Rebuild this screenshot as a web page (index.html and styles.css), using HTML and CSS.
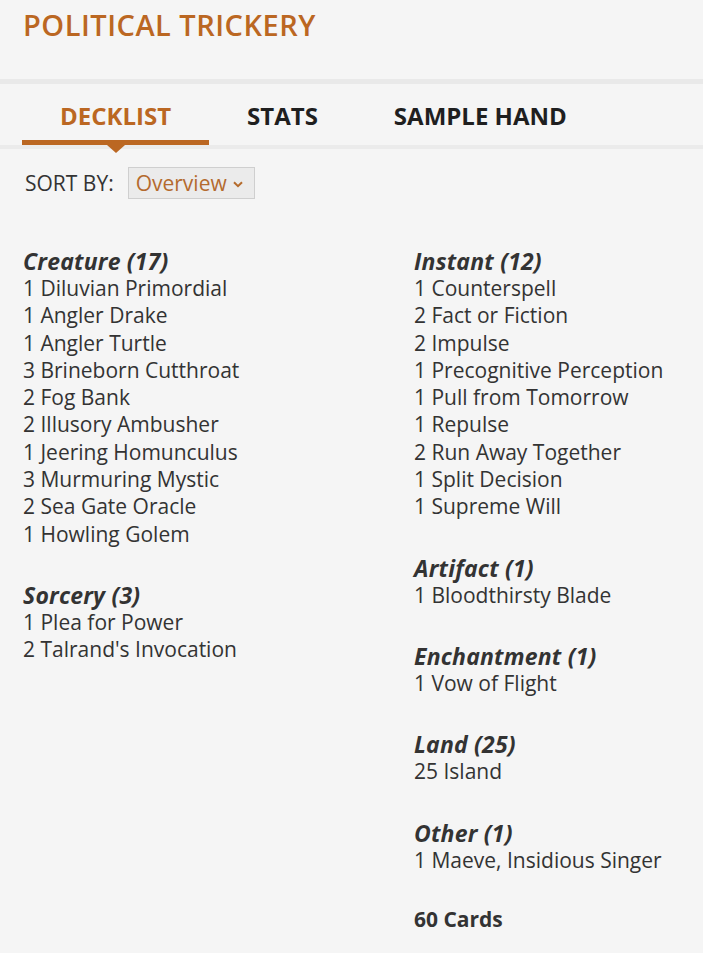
FILE: index.html
```html
<!DOCTYPE html>
<html>
<head>
<meta charset="utf-8">
<link rel="stylesheet" href="styles.css">
</head>
<body>
<div class="page">
  <h1 class="title">POLITICAL TRICKERY</h1>
  <div class="band"></div>
  <nav class="tabs">
    <div class="tab active">DECKLIST</div>
    <div class="tab">STATS</div>
    <div class="tab">SAMPLE HAND</div>
  </nav>
  <div class="band band2"></div>
  <div class="sort">
    <span class="sort-label">SORT BY:</span>
    <div class="select"><span>Overview</span>
      <svg class="chev" width="10" height="7" viewBox="0 0 10 7"><path d="M1 1.2 L5 5.2 L9 1.2" fill="none" stroke="#b56b2c" stroke-width="2"/></svg>
    </div>
  </div>
  <div class="cols">
    <div class="col">
      <section class="group">
        <h3>Creature (17)</h3>
        <div>1 Diluvian Primordial</div>
        <div>1 Angler Drake</div>
        <div>1 Angler Turtle</div>
        <div>3 Brineborn Cutthroat</div>
        <div>2 Fog Bank</div>
        <div>2 Illusory Ambusher</div>
        <div>1 Jeering Homunculus</div>
        <div>3 Murmuring Mystic</div>
        <div>2 Sea Gate Oracle</div>
        <div>1 Howling Golem</div>
      </section>
      <section class="group">
        <h3>Sorcery (3)</h3>
        <div>1 Plea for Power</div>
        <div>2 Talrand's Invocation</div>
      </section>
    </div>
    <div class="col">
      <section class="group">
        <h3>Instant (12)</h3>
        <div>1 Counterspell</div>
        <div>2 Fact or Fiction</div>
        <div>2 Impulse</div>
        <div>1 Precognitive Perception</div>
        <div>1 Pull from Tomorrow</div>
        <div>1 Repulse</div>
        <div>2 Run Away Together</div>
        <div>1 Split Decision</div>
        <div>1 Supreme Will</div>
      </section>
      <section class="group">
        <h3>Artifact (1)</h3>
        <div>1 Bloodthirsty Blade</div>
      </section>
      <section class="group">
        <h3>Enchantment (1)</h3>
        <div>1 Vow of Flight</div>
      </section>
      <section class="group">
        <h3>Land (25)</h3>
        <div>25 Island</div>
      </section>
      <section class="group">
        <h3>Other (1)</h3>
        <div>1 Maeve, Insidious Singer</div>
      </section>
      <div class="total">60 Cards</div>
    </div>
  </div>
</div>
</body>
</html>
```

FILE: styles.css
```css
html, body {
  margin: 0;
  padding: 0;
  background: #f5f5f5;
}
body {
  font-family: "Open Sans", "Liberation Sans", sans-serif;
  color: #333333;
  height: 953px;
  overflow: hidden;
}
.title {
  margin: 0;
  padding: 5px 0 0 23px;
  font-size: 29px;
  letter-spacing: 0.5px;
  font-weight: 600;
  color: #bb6722;
  line-height: 40px;
  height: 73px;
}
.band {
  height: 5px;
  background: #e9e9e9;
  margin-top: 1px;
}
.tabs {
  display: flex;
  padding-left: 22px;
  height: 61px;
}
.tab {
  position: relative;
  padding: 0 38px;
  font-size: 24px;
  font-weight: 700;
  color: #1f1f1f;
  line-height: 32px;
  padding-top: 16px;
}
.tab.active {
  color: #bb6722;
}
.tab.active::after {
  content: "";
  position: absolute;
  left: 0;
  right: 0;
  bottom: 0;
  height: 5px;
  background: #bb6722;
}
.tab.active::before {
  content: "";
  position: absolute;
  left: 50%;
  bottom: -8px;
  margin-left: -9px;
  border-left: 9px solid transparent;
  border-right: 9px solid transparent;
  border-top: 8px solid #bb6722;
  z-index: 2;
}
.band2 {
  margin-top: 0;
  height: 4px;
  background: #ebebeb;
}
.sort {
  display: flex;
  align-items: center;
  padding: 18px 0 0 25px;
  gap: 14px;
}
.sort-label {
  font-size: 21px;
  color: #333;
}
.select {
  display: flex;
  align-items: center;
  gap: 6px;
  box-sizing: border-box;
  height: 32px;
  width: 127px;
  padding: 0 10px 0 7px;
  background: #ebebeb;
  border: 1px solid #cfcfcf;
  font-size: 21px;
  color: #b46a2e;
}
.chev {
  margin-top: 2px;
}
.cols {
  display: grid;
  grid-template-columns: 391px 1fr;
  padding: 48px 0 0 23px;
}
.group {
  font-size: 21px;
  line-height: 27.3px;
  margin-bottom: 33px;
}
.group h3 {
  margin: 0;
  font-size: 23px;
  letter-spacing: 0.2px;
  font-weight: 700;
  font-style: italic;
  line-height: 28px;
  color: #333;
}
.total {
  font-size: 21px;
  font-weight: 700;
  line-height: 27px;
  margin-top: -1px;
}
```
